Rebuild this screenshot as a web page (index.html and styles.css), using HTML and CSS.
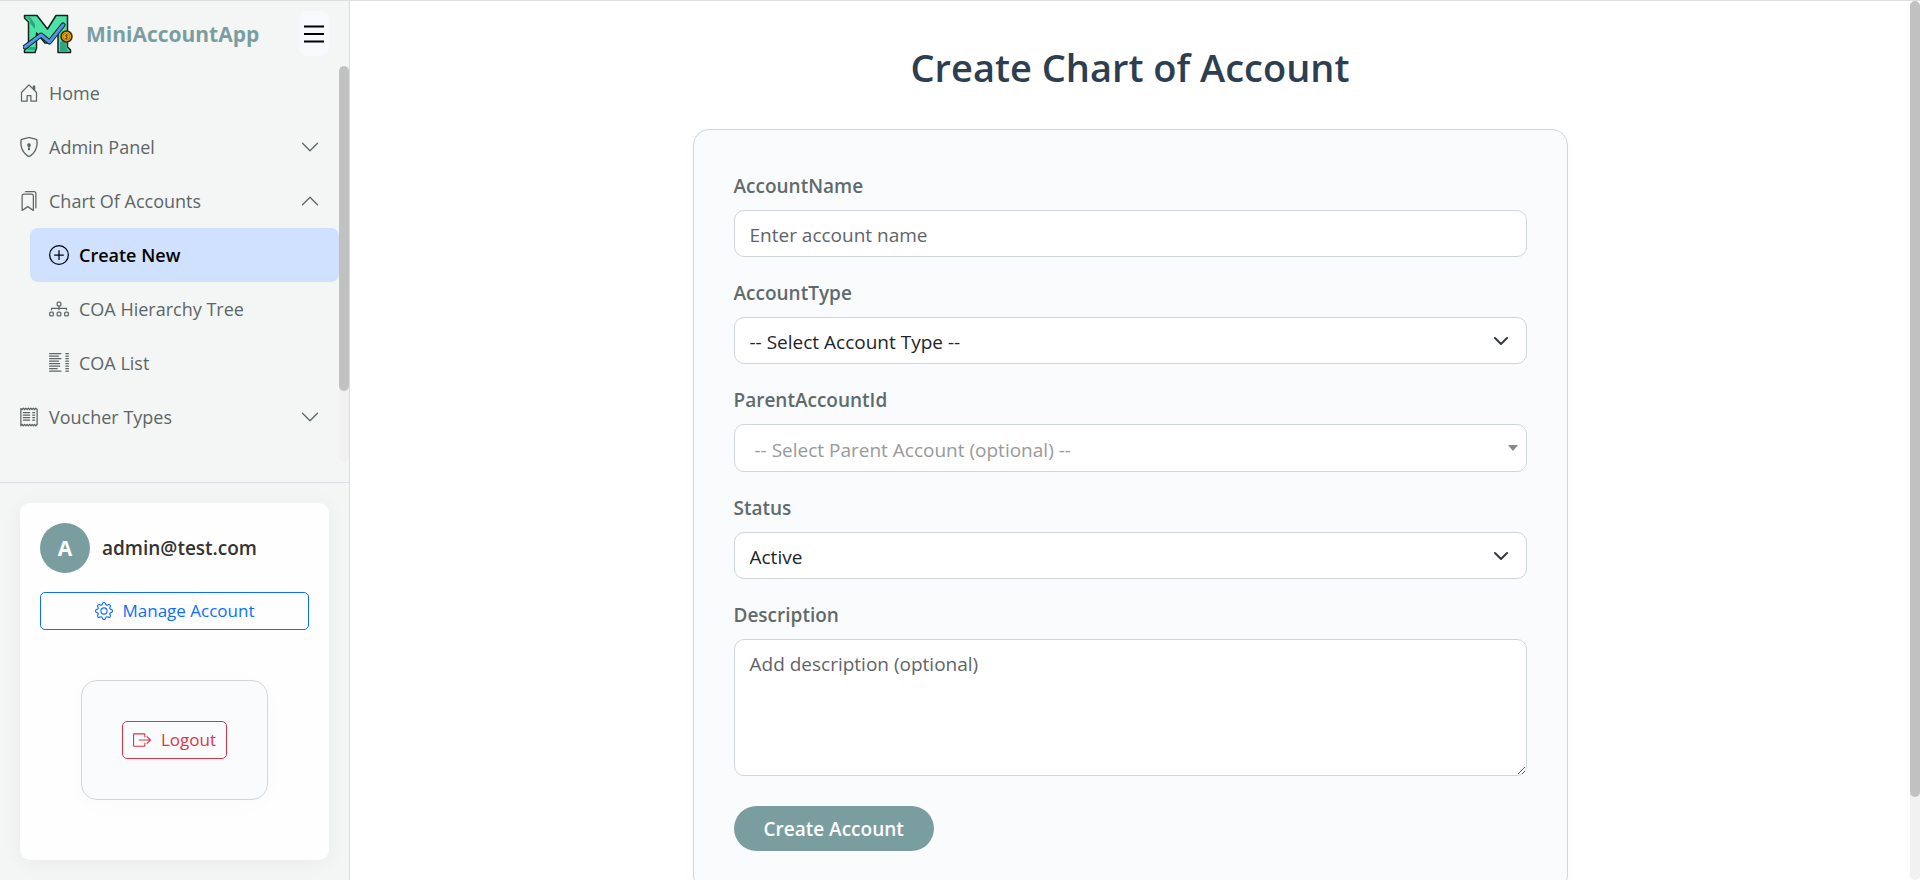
FILE: index.html
```html
<!DOCTYPE html>
<html lang="en">
<head>
<meta charset="utf-8">
<meta name="viewport" content="width=device-width, initial-scale=1">
<title>Create Chart of Account - MiniAccountApp</title>
<link rel="stylesheet" href="styles.css">
</head>
<body>
<div class="app">
  <aside class="sidebar">
    <header class="brand">
      <a class="brand-link" href="#">
        <svg class="logo" viewBox="0 0 50 40" aria-hidden="true">
          <path d="M1.500 1.500H14L24.500 15 33 1.500H44.500V33L47.500 36V38.500H35V18L27 29H22L13.500 19V34L12 38.500H1.500V36L5.500 33V8L1.500 4Z" fill="#4be3a4" stroke="#15201f" stroke-width="1.500" stroke-linejoin="round"/>
          <path d="M3 3H7L12 10V15L7 9V6ZM7 33H12V36H4ZM37 28L43 26V33L45 37H37Z" fill="#2ba583"/>
          <path d="M2 33L18 21 26.500 28 40 11" fill="none" stroke="#15201f" stroke-width="5" stroke-linecap="round" stroke-linejoin="round"/>
          <path d="M2 33L18 21 26.500 28 40 11" fill="none" stroke="#4e95e2" stroke-width="3" stroke-linecap="round" stroke-linejoin="round"/>
          <circle cx="43.500" cy="22.500" r="5.500" fill="#e8a317" stroke="#3b2a0c" stroke-width="1.500"/>
          <circle cx="43.500" cy="22.500" r="3.500" fill="none" stroke="#a8700f" stroke-width=".7"/>
          <path d="M45 21H43Q41.500 22 43.500 22.500T44 24.500H42M43.500 20V25.500" fill="none" stroke="#6b470b" stroke-width=".8"/>
        </svg>
        <span>MiniAccountApp</span>
      </a>
      <button class="toggle" type="button" aria-label="Toggle menu">
        <svg viewBox="0 0 20 20" aria-hidden="true"><path d="M0 2.500H20M0 10H20M0 17.500H20" stroke="#000" stroke-width="2"/></svg>
      </button>
    </header>

    <div class="nav-area">
      <nav class="nav" aria-label="Main">
        <a class="nav-item" href="#">
          <svg class="icon" viewBox="0 0 16 16"><path d="M8.354 1.146a.5.5 0 0 0-.708 0l-6 6A.5.5 0 0 0 1.500 7.500v7a.5.5 0 0 0 .5.5h4.500a.5.5 0 0 0 .5-.5v-4h2v4a.5.5 0 0 0 .5.5H14a.5.5 0 0 0 .5-.5v-7a.5.5 0 0 0-.146-.354L13 5.793V2.500a.5.5 0 0 0-.5-.5h-1a.5.5 0 0 0-.5.5v1.293zM2.500 14V7.707l5.500-5.500 5.500 5.500V14H10v-4a.5.5 0 0 0-.5-.5h-3a.5.5 0 0 0-.5.5v4z"/></svg>
          <span>Home</span>
        </a>
        <a class="nav-item" href="#">
          <svg class="icon" viewBox="0 0 16 16"><path d="M5.338 1.590a61 61 0 0 0-2.837.856.480.480 0 0 0-.328.390c-.554 4.157.726 7.190 2.253 9.188a10.700 10.700 0 0 0 2.287 2.233c.346.244.652.420.893.533q.180.085.293.118a1 1 0 0 0 .101.025 1 1 0 0 0 .1-.025q.114-.034.294-.118c.240-.113.547-.290.893-.533a10.700 10.700 0 0 0 2.287-2.233c1.527-1.997 2.807-5.031 2.253-9.188a.480.480 0 0 0-.328-.390c-.651-.213-1.750-.560-2.837-.855C9.552 1.290 8.531 1.067 8 1.067c-.530 0-1.552.223-2.662.524zM5.072.560C6.157.265 7.310 0 8 0s1.843.265 2.928.560c1.110.300 2.229.655 2.887.870a1.540 1.540 0 0 1 1.044 1.262c.596 4.477-.787 7.795-2.465 9.990a11.800 11.800 0 0 1-2.517 2.453 7 7 0 0 1-1.048.625c-.280.132-.581.240-.829.240s-.548-.108-.829-.240a7 7 0 0 1-1.048-.625 11.800 11.800 0 0 1-2.517-2.453C1.928 10.487.545 7.169 1.141 2.692A1.540 1.540 0 0 1 2.185 1.430 63 63 0 0 1 5.072.560"/><path d="M9.500 6.500a1.500 1.500 0 0 1-1 1.415l.385 1.990a.5.5 0 0 1-.491.595h-.788a.5.5 0 0 1-.490-.595l.384-1.990a1.500 1.500 0 1 1 2-1.415"/></svg>
          <span>Admin Panel</span>
          <svg class="icon chevron" viewBox="0 0 16 16"><path d="M2 5L8 11 14 5" fill="none" stroke="currentColor" stroke-linecap="round" stroke-linejoin="round"/></svg>
        </a>
        <a class="nav-item" href="#" aria-expanded="true">
          <svg class="icon" viewBox="0 0 16 16"><path d="M2 4a2 2 0 0 1 2-2h6a2 2 0 0 1 2 2v11.500a.5.5 0 0 1-.777.416L7 13.101l-4.223 2.815A.5.5 0 0 1 2 15.500zm2-1a1 1 0 0 0-1 1v10.566l3.723-2.482a.5.5 0 0 1 .554 0L11 14.566V4a1 1 0 0 0-1-1z"/><path d="M4.268 1H12a1 1 0 0 1 1 1v11.768l.223.148A.5.5 0 0 0 14 13.500V2a2 2 0 0 0-2-2H6a2 2 0 0 0-1.732 1"/></svg>
          <span>Chart Of Accounts</span>
          <svg class="icon chevron" viewBox="0 0 16 16"><path d="M2 11L8 5 14 11" fill="none" stroke="currentColor" stroke-linecap="round" stroke-linejoin="round"/></svg>
        </a>
        <div class="subnav">
          <a class="nav-item active" href="#" aria-current="page">
            <svg class="icon" viewBox="0 0 16 16"><path d="M8 15A7 7 0 1 1 8 1a7 7 0 0 1 0 14m0 1A8 8 0 1 0 8 0a8 8 0 0 0 0 16"/><path d="M8 4a.5.5 0 0 1 .5.5v3h3a.5.5 0 0 1 0 1h-3v3a.5.5 0 0 1-1 0v-3h-3a.5.5 0 0 1 0-1h3v-3A.5.5 0 0 1 8 4"/></svg>
            <span>Create New</span>
          </a>
          <a class="nav-item" href="#">
            <svg class="icon" viewBox="0 0 16 16"><path fill-rule="evenodd" d="M6 3.500A1.500 1.500 0 0 1 7.500 2h1A1.500 1.500 0 0 1 10 3.500v1A1.500 1.500 0 0 1 8.500 6v1H14a.5.5 0 0 1 .5.5v1a.5.5 0 0 1-1 0V8h-5v.5a.5.5 0 0 1-1 0V8h-5v.5a.5.5 0 0 1-1 0v-1A.5.5 0 0 1 2 7h5.500V6A1.500 1.500 0 0 1 6 4.500zM8.500 5a.5.5 0 0 0 .5-.5v-1a.5.5 0 0 0-.5-.5h-1a.5.5 0 0 0-.5.5v1a.5.5 0 0 0 .5.5zM0 11.500A1.500 1.500 0 0 1 1.500 10h1A1.500 1.500 0 0 1 4 11.500v1A1.500 1.500 0 0 1 2.500 14h-1A1.500 1.500 0 0 1 0 12.500zm1.500-.5a.5.5 0 0 0-.5.5v1a.5.5 0 0 0 .5.5h1a.5.5 0 0 0 .5-.5v-1a.5.5 0 0 0-.5-.5zm4.500.5A1.500 1.500 0 0 1 7.500 10h1a1.500 1.500 0 0 1 1.500 1.500v1A1.500 1.500 0 0 1 8.500 14h-1A1.500 1.500 0 0 1 6 12.500zm1.500-.5a.5.5 0 0 0-.5.5v1a.5.5 0 0 0 .5.5h1a.5.5 0 0 0 .5-.5v-1a.5.5 0 0 0-.5-.5zm4.500.5a1.500 1.500 0 0 1 1.500-1.500h1a1.500 1.500 0 0 1 1.500 1.500v1a1.500 1.500 0 0 1-1.500 1.500h-1a1.500 1.500 0 0 1-1.500-1.500zm1.500-.5a.5.5 0 0 0-.5.5v1a.5.5 0 0 0 .5.5h1a.5.5 0 0 0 .5-.5v-1a.5.5 0 0 0-.5-.5z"/></svg>
            <span>COA Hierarchy Tree</span>
          </a>
          <a class="nav-item" href="#">
            <svg class="icon" viewBox="0 0 16 16"><path d="M.5.5h9M.5 2.500h7M.5 4.500h9M.5 6.500h7M.5 8.500h8M.5 10.500h8M.5 12.500h6M.5 14.500h9M13.500.5h2M13.500 2.500h2M13.500 4.500h2M13.500 6.500h2M13.500 8.500h2M13.500 10.500h2M13.500 12.500h2M13.500 14.500h2" fill="none" stroke="currentColor" stroke-linecap="round"/></svg>
            <span>COA List</span>
          </a>
        </div>
        <a class="nav-item" href="#">
          <svg class="icon" viewBox="0 0 16 16"><path d="M1.500 1.200L2.500 2 3.500 1 4.500 2 5.500 1 6.500 2 7.500 1 8.500 2 9.500 1 10.500 2 11.500 1 12.500 2 13.500 1 14.500 2V14L13.500 15 12.500 14 11.500 15 10.500 14 9.500 15 8.500 14 7.500 15 6.500 14 5.500 15 4.500 14 3.500 15 2.500 14 1.500 15ZM3.500 4.500h5M3.500 6.500h5M3.500 8.500h5M3.500 10.500h5M11 4.500h1.500M11 6.500h1.500M11 8.500h1.500M11 10.500h1.500" fill="none" stroke="currentColor" stroke-linecap="round" stroke-linejoin="round"/></svg>
          <span>Voucher Types</span>
          <svg class="icon chevron" viewBox="0 0 16 16"><path d="M2 5L8 11 14 5" fill="none" stroke="currentColor" stroke-linecap="round" stroke-linejoin="round"/></svg>
        </a>
      </nav>
      <div class="scrollbar" aria-hidden="true"><div class="thumb nav-thumb"></div></div>
    </div>

    <footer class="account">
      <section class="profile">
        <div class="user"><span class="avatar">A</span><span class="email">admin@test.com</span></div>
        <a class="btn btn-primary" href="#">
          <svg class="btn-icon" viewBox="0 0 16 16"><path d="M8 4.754a3.246 3.246 0 1 0 0 6.492 3.246 3.246 0 0 0 0-6.492M5.754 8a2.246 2.246 0 1 1 4.492 0 2.246 2.246 0 0 1-4.492 0"/><path d="M9.796 1.343c-.527-1.790-3.065-1.790-3.592 0l-.094.319a.873.873 0 0 1-1.255.520l-.292-.160c-1.640-.892-3.433.902-2.540 2.541l.159.292a.873.873 0 0 1-.520 1.255l-.319.094c-1.790.527-1.790 3.065 0 3.592l.319.094a.873.873 0 0 1 .520 1.255l-.160.292c-.892 1.640.901 3.434 2.541 2.540l.292-.159a.873.873 0 0 1 1.255.520l.094.319c.527 1.790 3.065 1.790 3.592 0l.094-.319a.873.873 0 0 1 1.255-.520l.292.160c1.640.893 3.434-.902 2.540-2.541l-.159-.292a.873.873 0 0 1 .520-1.255l.319-.094c1.790-.527 1.790-3.065 0-3.592l-.319-.094a.873.873 0 0 1-.520-1.255l.160-.292c.893-1.640-.902-3.433-2.541-2.540l-.292.159a.873.873 0 0 1-1.255-.520zm-2.633.283c.246-.835 1.428-.835 1.674 0l.094.319a1.873 1.873 0 0 0 2.693 1.115l.291-.160c.764-.415 1.600.420 1.184 1.185l-.159.292a1.873 1.873 0 0 0 1.116 2.692l.318.094c.835.246.835 1.428 0 1.674l-.319.094a1.873 1.873 0 0 0-1.115 2.693l.160.291c.415.764-.420 1.600-1.185 1.184l-.291-.159a1.873 1.873 0 0 0-2.693 1.116l-.094.318c-.246.835-1.428.835-1.674 0l-.094-.319a1.873 1.873 0 0 0-2.692-1.115l-.292.160c-.764.415-1.600-.420-1.184-1.185l.159-.291A1.873 1.873 0 0 0 1.945 8.930l-.319-.094c-.835-.246-.835-1.428 0-1.674l.319-.094A1.873 1.873 0 0 0 3.060 4.377l-.160-.292c-.415-.764.420-1.600 1.185-1.184l.292.159a1.873 1.873 0 0 0 2.692-1.115z"/></svg>
          <span>Manage Account</span>
        </a>
        <form class="logout panel">
          <button class="btn btn-danger" type="button">
            <svg class="btn-icon" viewBox="0 0 16 16"><path d="M10.500 5V3A.5.5 0 0 0 10 2.500H1A.5.5 0 0 0 .5 3V13A.5.5 0 0 0 1 13.500H10A.5.5 0 0 0 10.500 13V11M5.500 8H15M12.500 5L15.500 8 12.500 11" fill="none" stroke="currentColor" stroke-linecap="round" stroke-linejoin="round"/></svg>
            <span>Logout</span>
          </button>
        </form>
      </section>
    </footer>
  </aside>

  <main class="main">
    <div class="content">
      <h1 class="title">Create Chart of Account</h1>
      <form class="form panel">
        <div class="field">
          <label for="name">AccountName</label>
          <input class="control" id="name" type="text" placeholder="Enter account name">
        </div>
        <div class="field">
          <label for="type">AccountType</label>
          <select class="control select" id="type"><option>-- Select Account Type --</option></select>
        </div>
        <div class="field">
          <label for="parent">ParentAccountId</label>
          <select class="control search-select" id="parent"><option>-- Select Parent Account (optional) --</option></select>
        </div>
        <div class="field">
          <label for="status">Status</label>
          <select class="control select" id="status"><option>Active</option><option>Inactive</option></select>
        </div>
        <div class="field">
          <label for="description">Description</label>
          <textarea class="control" id="description" placeholder="Add description (optional)"></textarea>
        </div>
        <button class="submit" type="button">Create Account</button>
      </form>
    </div>
    <div class="scrollbar" aria-hidden="true"><div class="thumb main-thumb"></div></div>
  </main>
</div>
</body>
</html>
```
FILE: styles.css
```css
* {
  box-sizing: border-box;
}

body {
  margin: 0;
  background: #fff;
  color: #212529;
  font-family: "Segoe UI", "Open Sans", "Noto Sans", sans-serif;
  font-size: 18px;
  line-height: 24px;
}

button, input, select, textarea {
  font: inherit;
}

.app {
  display: flex;
  height: 100vh;
  overflow: hidden;
  border-top: 1px solid #dedfdf;
}

.sidebar {
  display: flex;
  flex-direction: column;
  flex: 0 0 350px;
  background: #f4f6f5;
  border-right: 1px solid #d9dddf;
}

.brand {
  display: flex;
  align-items: center;
  justify-content: space-between;
  padding: 10px 20px 10px 23px;
}

.brand-link {
  display: flex;
  align-items: center;
  gap: 13px;
  color: #7a9e9f;
  font-size: 21px;
  font-weight: 700;
  text-decoration: none;
}

.logo {
  width: 50px;
  height: 40px;
}

.toggle {
  display: flex;
  align-items: center;
  width: 30px;
  height: 45px;
  padding: 5px;
  border: 0;
  border-radius: 8px;
  background: #f8f9fc;
}

.toggle svg {
  width: 20px;
  height: 20px;
}

.nav-area {
  display: flex;
  flex: 1;
  min-height: 0;
  margin-bottom: 20px;
}

.nav {
  flex: 1;
  overflow: hidden;
}

.nav-item {
  display: flex;
  align-items: center;
  gap: 10px;
  height: 54px;
  padding: 0 19px;
  border-radius: 8px;
  color: #5c6666;
  text-decoration: none;
}

.icon {
  width: 20px;
  height: 20px;
  fill: currentColor;
}

.chevron {
  margin-left: auto;
}

.subnav {
  padding-left: 30px;
}

.active {
  background: #d0e1ff;
  color: #000;
  font-weight: 600;
}

.scrollbar {
  flex: 0 0 10px;
  border-radius: 5px;
  background: #f1f1f1;
}

.thumb {
  border-radius: 5px;
  background: #c1c1c1;
}

.nav-thumb {
  height: 82%;
}

.main-thumb {
  height: calc(100% - 83px);
}

.account {
  padding: 20px;
  border-top: 1px solid #dbdfe4;
}

.profile {
  display: flex;
  flex-direction: column;
  padding: 20px 20px 60px;
  border-radius: 10px;
  background: #fefefe;
  box-shadow: 0 2px 20px rgba(0, 0, 0, 0.05);
}

.user {
  display: flex;
  align-items: center;
  gap: 12px;
  margin-bottom: 19px;
  color: #333;
  font-size: 19px;
  font-weight: 600;
}

.avatar {
  display: grid;
  place-items: center;
  width: 50px;
  height: 50px;
  border-radius: 50%;
  background: #7a9e9f;
  color: #fff;
  font-size: 21px;
  font-weight: 700;
}

.btn {
  display: flex;
  align-items: center;
  justify-content: center;
  gap: 10px;
  height: 38px;
  padding: 0 10px;
  border: 1px solid currentColor;
  border-radius: 5px;
  background: transparent;
  font-size: 17px;
  text-decoration: none;
}

.btn-primary {
  color: #0d6efd;
}

.btn-danger {
  color: #dc3545;
}

.btn-icon {
  width: 18px;
  height: 18px;
  fill: currentColor;
}

.panel {
  padding: 40px;
  border: 1px solid #d0d8dc;
  border-radius: 16px;
  background: #fafbfd;
  box-shadow: 0 4px 20px rgba(0, 0, 0, 0.02);
}

.logout {
  align-self: center;
  margin-top: 50px;
}

.main {
  display: flex;
  flex: 1;
  min-width: 0;
}

.content {
  flex: 1;
  overflow: hidden;
  padding: 40px 20px;
}

.title {
  margin: 0 0 36px;
  color: #2c3e50;
  font-size: 38px;
  font-weight: 600;
  line-height: 52px;
  text-align: center;
}

.form {
  max-width: 875px;
  margin: 0 auto;
}

.field {
  display: flex;
  flex-direction: column;
  gap: 8px;
  margin-bottom: 20px;
}

.field label {
  color: #5f6b6b;
  font-size: 19px;
  font-weight: 600;
  line-height: 32px;
}

.control {
  width: 100%;
  height: 47px;
  padding: 9px 15px 7px;
  border: 1px solid #ced6da;
  border-radius: 10px;
  background: #fff;
  color: #212529;
  font-size: 19px;
  line-height: 30px;
}

.control::placeholder {
  color: #5f6469;
  opacity: 1;
}

.select {
  appearance: none;
  background: #fff url("data:image/svg+xml,%3Csvg xmlns='http://www.w3.org/2000/svg' viewBox='0 0 16 16'%3E%3Cpath fill='none' stroke='%23343a40' stroke-linecap='round' stroke-linejoin='round' stroke-width='2' d='m2 5 6 6 6-6'/%3E%3C/svg%3E") no-repeat right 17px center / 16px 16px;
}

.search-select {
  appearance: none;
  height: 48px;
  padding: 10px 20px 6px;
  color: #999;
  background: #fff url("data:image/svg+xml,%3Csvg xmlns='http://www.w3.org/2000/svg' viewBox='0 0 10 6'%3E%3Cpath fill='%23888' d='M0 0h10L5 6z'/%3E%3C/svg%3E") no-repeat right 8px center / 10px 6px;
}

textarea.control {
  height: 137px;
  resize: vertical;
}

.submit {
  height: 45px;
  margin-top: 10px;
  padding: 0 30px;
  border: 0;
  border-radius: 30px;
  background: #7a9e9f;
  color: #fff;
  font-size: 19px;
  font-weight: 600;
}
```
